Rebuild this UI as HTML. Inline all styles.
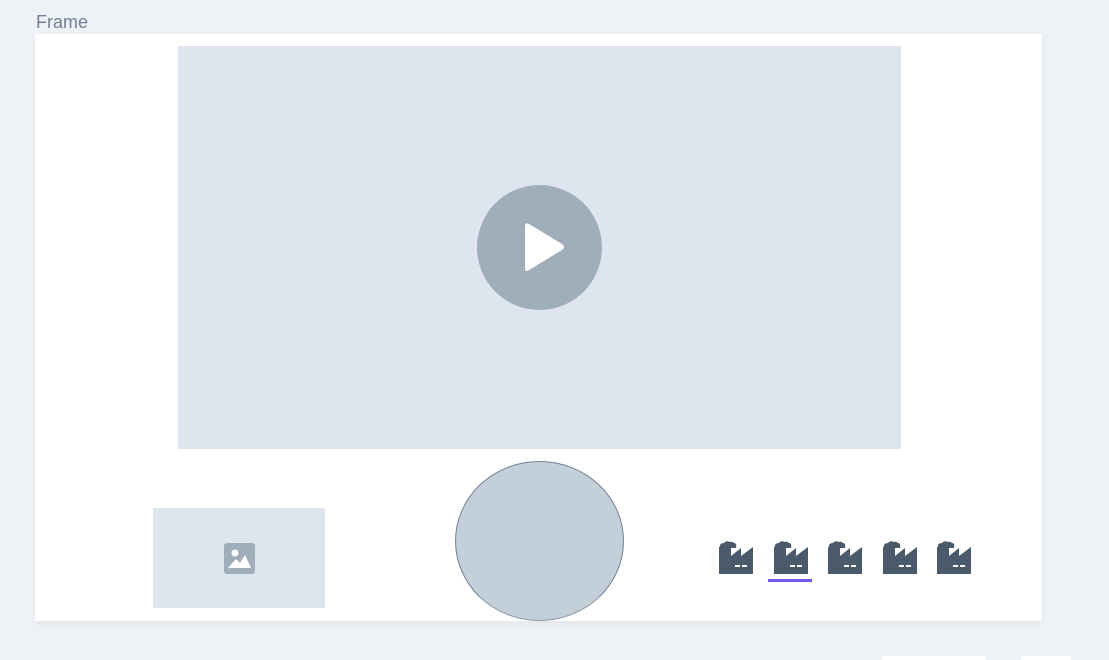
<!DOCTYPE html>
<html><head><style>
body{margin:0;width:1109px;height:658px;background:#eef2f6;position:relative;overflow:hidden;font-family:"Liberation Sans",sans-serif}
.lbl{position:absolute;left:36px;top:12px;font-size:18px;color:#718096}
.frame{position:absolute;left:35px;top:34px;width:1007px;height:587px;background:#fff;box-shadow:0 2px 6px rgba(0,0,0,0.06)}
.vid{position:absolute;left:178px;top:46px;width:723px;height:403px;background:#dfe5ee}
.play{position:absolute;left:477px;top:185px;width:125px;height:125px;border-radius:50%;background:#a0aebc}
.img{position:absolute;left:153px;top:508px;width:172px;height:100px;background:#dfe5ee}
.circ{position:absolute;left:455px;top:461px;width:167px;height:158px;border-radius:50%;background:#c3d0da;border:1.5px solid #718096;border-bottom-color:#8a98a8}
.ic{position:absolute;top:541px}
.ul{position:absolute;left:768px;top:579px;width:44px;height:3px;background:#6c5ce7}
.pill{position:absolute;top:656px;height:4px;background:#fff;border-radius:3px 3px 0 0}
</style></head><body>
<div class="lbl">Frame</div>
<div class="frame"></div>
<div class="vid"></div>
<div class="play"><svg width="125" height="125"><path d="M48 42 Q48 37 52 39 L85 59 Q89 62 85 65 L52 85 Q48 88 48 83Z" fill="#fff"/></svg></div>
<div class="img"><svg style="position:absolute;left:71px;top:35px" width="31" height="31"><rect width="31" height="31" rx="3" fill="#a0aebc"/><circle cx="11" cy="10" r="3.5" fill="#fff"/><path d="M4 25 L12 16 L16 20 L21 12 L27 25Z" fill="#fff"/></svg></div>
<div class="circ"></div>
<svg class="ic" style="left:719px" width="34" height="34"><use href="#f"/></svg>
<svg class="ic" style="left:774px" width="34" height="34"><use href="#f"/></svg>
<svg class="ic" style="left:828px" width="34" height="34"><use href="#f"/></svg>
<svg class="ic" style="left:883px" width="34" height="34"><use href="#f"/></svg>
<svg class="ic" style="left:937px" width="34" height="34"><use href="#f"/></svg>
<svg width="0" height="0" style="position:absolute"><defs><g id="f"><path d="M1 7 Q0 2 5 2 Q7 -1 11 1 Q13 0 15 2 Q18 2 17 7Z" fill="#4a5a6a"/><path d="M0 6 H12 V15 L22 7 V15 L34 6 V33 H0Z" fill="#4a5a6a"/><rect x="16" y="24" width="5" height="2" fill="#fff"/><rect x="23" y="24" width="5" height="2" fill="#fff"/></g></defs></svg>
<div class="ul"></div>
<div class="pill" style="left:882px;width:104px"></div>
<div class="pill" style="left:1021px;width:50px"></div>
</body></html>
